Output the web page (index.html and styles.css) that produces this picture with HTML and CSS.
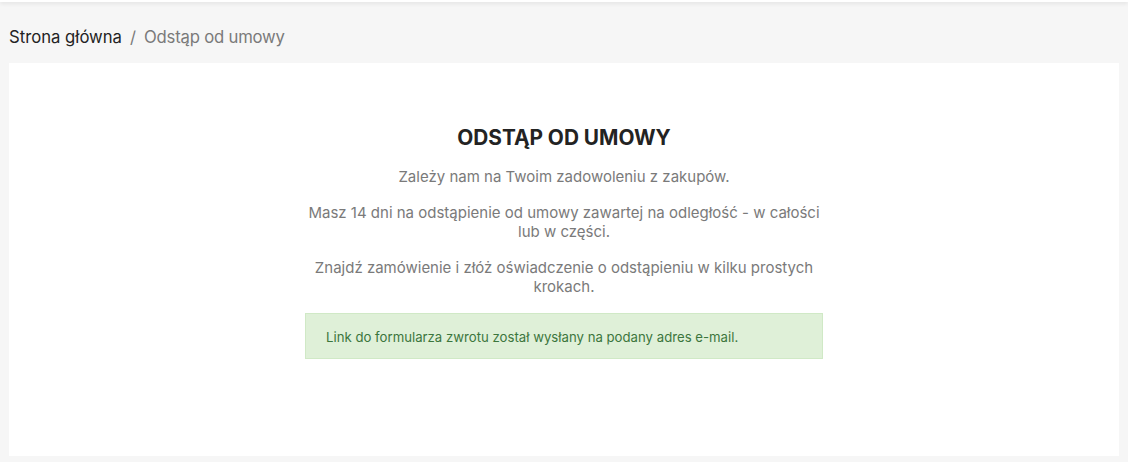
FILE: index.html
```html
<!DOCTYPE html>
<html lang="pl">
<head>
<meta charset="utf-8">
<title>Odstąp od umowy</title>
<link rel="stylesheet" href="styles.css">
</head>
<body>
<div class="topbar"></div>
<nav class="breadcrumb">
  <a class="crumb" href="#">Strona główna</a>
  <span class="sep">/</span>
  <span class="crumb current">Odstąp od umowy</span>
</nav>
<main class="card">
  <section class="content">
    <h1 class="title">ODSTĄP OD UMOWY</h1>
    <p class="text">Zależy nam na Twoim zadowoleniu z zakupów.</p>
    <p class="text">Masz 14 dni na odstąpienie od umowy zawartej na odległość - w całości lub w części.</p>
    <p class="text">Znajdź zamówienie i złóż oświadczenie o odstąpieniu w kilku prostych krokach.</p>
    <div class="alert">Link do formularza zwrotu został wysłany na podany adres e-mail.</div>
  </section>
</main>
</body>
</html>
```
FILE: styles.css
```css
html, body {
  margin: 0;
  padding: 0;
}
body {
  background: #f6f6f6;
  font-family: Inter, "Noto Sans", sans-serif;
  width: 1128px;
  height: 462px;
  overflow: hidden;
}
.topbar {
  height: 2px;
  background: #fff;
  box-shadow: 0 1px 4px rgba(0,0,0,0.15);
}
.breadcrumb {
  box-sizing: border-box;
  display: flex;
  align-items: center;
  gap: 7px;
  padding: 9px 9px 0;
  height: 61px;
  font-size: 16.7px;
  color: #7a7a7a;
}
.crumb {
  color: #232323;
  text-decoration: none;
}
.crumb.current {
  color: #7a7a7a;
  letter-spacing: -0.2px;
}
.sep {
  color: #7a7a7a;
  margin: 0 1px;
}
.card {
  margin: 0 9px;
  background: #fff;
  height: 393px;
  display: flex;
  justify-content: center;
}
.content {
  width: 518px;
  padding-top: 60px;
  text-align: center;
}
.title {
  margin: 0 0 14px;
  font-size: 20.8px;
  font-weight: 700;
  color: #232323;
  line-height: 30px;
}
.text {
  margin: 0 0 17px;
  font-size: 15px;
  line-height: 19px;
  color: #7a7a7a;
}
.alert {
  margin-top: 0;
  text-align: left;
  background: #dff0d8;
  border: 1px solid #d0e9c6;
  color: #3c763d;
  font-size: 13.2px;
  padding: 13px 20px 11px;
  line-height: 20px;
}
```
